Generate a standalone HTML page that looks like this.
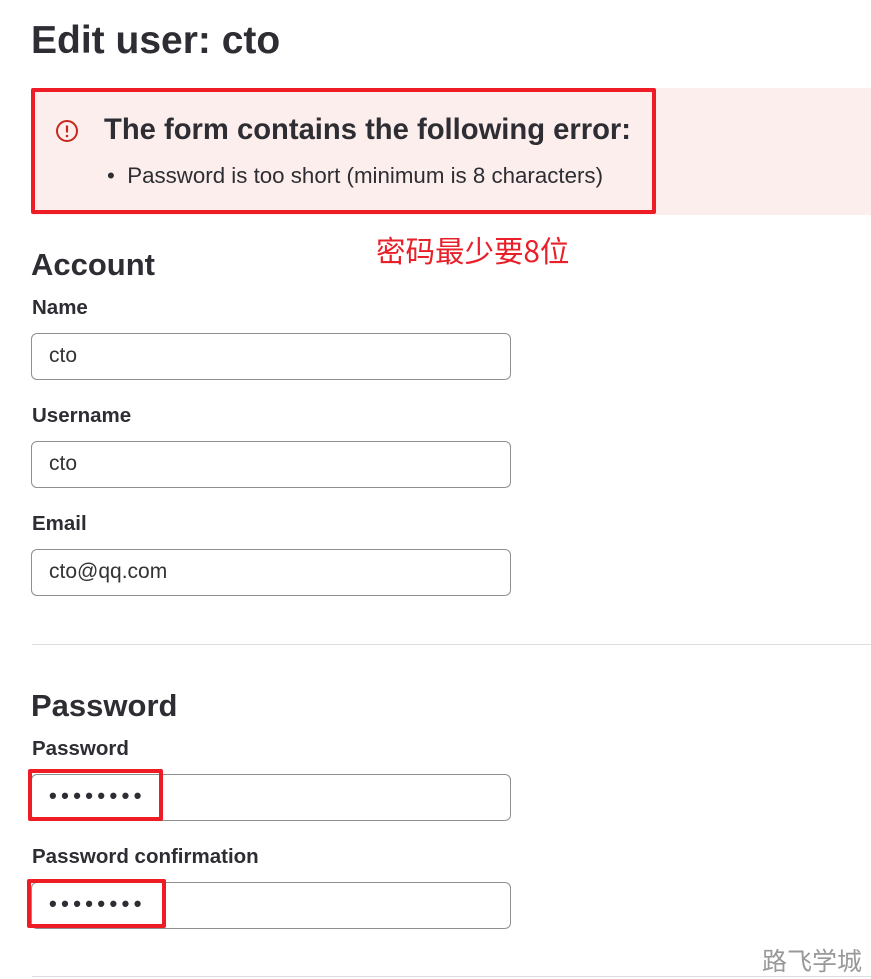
<!DOCTYPE html>
<html><head><meta charset="utf-8"><style>
body{margin:0;width:871px;height:979px;background:#fff;position:relative;overflow:hidden;font-family:"Liberation Sans","Noto Sans CJK SC",sans-serif;color:#2d2d33}
.a{position:absolute;white-space:nowrap}
.in{position:absolute;left:31px;width:480px;height:47px;border:1px solid #8f8f8f;border-radius:6px;box-sizing:border-box}
.in span{position:absolute;left:17px;top:10px;font-size:21px;color:#333}
.lb{position:absolute;left:32px;font-size:20.5px;font-weight:bold;color:#2d2d33}
.h2{position:absolute;left:31px;font-size:31px;font-weight:bold;color:#2d2d33}
.red{position:absolute;border:4px solid #ee1c25;border-radius:2px;box-sizing:border-box}
.dots{position:absolute;left:49px;font-size:22px;letter-spacing:4.4px;font-weight:bold;color:#2d2d33}
</style></head><body>
<div class="a" style="left:31px;top:19px;font-size:39px;font-weight:bold">Edit user: cto</div>
<div class="a" style="left:32px;top:88px;width:839px;height:127px;background:#fbeeec"></div>
<div class="red" style="left:31px;top:88px;width:625px;height:126px"></div>
<svg class="a" style="left:55px;top:119px" width="24" height="24" viewBox="0 0 24 24"><circle cx="12" cy="12" r="10" fill="none" stroke="#c8281c" stroke-width="2"/><line x1="12" y1="6.5" x2="12" y2="13.5" stroke="#c8281c" stroke-width="2.2"/><circle cx="12" cy="17" r="1.3" fill="#c8281c"/></svg>
<div class="a" style="left:104px;top:114px;font-size:29.2px;font-weight:bold">The form contains the following error:</div>
<div class="a" style="left:107px;top:163px;font-size:22.3px">•&nbsp; Password is too short (minimum is 8 characters)</div>
<div class="a" style="left:376px;top:229px;font-size:29.5px;color:#e8202a;font-family:'Noto Sans CJK SC',sans-serif">密码最少要8位</div>
<div class="h2" style="top:247px">Account</div>
<div class="lb" style="top:296px">Name</div>
<div class="in" style="top:333px"><span>cto</span></div>
<div class="lb" style="top:404px">Username</div>
<div class="in" style="top:441px"><span>cto</span></div>
<div class="lb" style="top:512px">Email</div>
<div class="in" style="top:549px"><span>cto@qq.com</span></div>
<div class="a" style="left:32px;top:644px;width:839px;height:1px;background:#ddd"></div>
<div class="h2" style="top:688px">Password</div>
<div class="lb" style="top:737px">Password</div>
<div class="in" style="top:774px"></div>
<div class="dots" style="top:783px">••••••••</div>
<div class="red" style="left:28px;top:769px;width:135px;height:52px"></div>
<div class="lb" style="top:845px">Password confirmation</div>
<div class="in" style="top:882px"></div>
<div class="dots" style="top:891px">••••••••</div>
<div class="red" style="left:27px;top:879px;width:139px;height:49px"></div>
<div class="a" style="left:762px;top:942px;font-size:25px;color:#999;font-family:'Noto Sans CJK SC',sans-serif">路飞学城</div>
<div class="a" style="left:32px;top:976px;width:839px;height:1px;background:#ddd"></div>
</body></html>
